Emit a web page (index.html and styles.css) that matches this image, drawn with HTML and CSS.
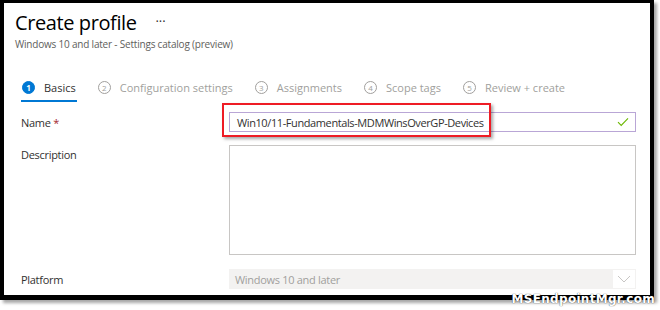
FILE: index.html
```html
<!DOCTYPE html>
<html lang="en">
<head>
<meta charset="utf-8">
<title>Create profile</title>
<link rel="stylesheet" href="styles.css">
</head>
<body>
<div class="frame">
  <header class="head">
    <h1 class="title">Create profile <span class="more">···</span></h1>
    <p class="sub">Windows 10 and later - Settings catalog (preview)</p>
  </header>
  <nav class="steps">
    <div class="step active"><span class="num">1</span><span class="lbl">Basics</span></div>
    <div class="step"><span class="num">2</span><span class="lbl">Configuration settings</span></div>
    <div class="step"><span class="num">3</span><span class="lbl">Assignments</span></div>
    <div class="step"><span class="num">4</span><span class="lbl">Scope tags</span></div>
    <div class="step"><span class="num">5</span><span class="lbl">Review + create</span></div>
  </nav>
  <div class="form">
    <div class="row row-name">
      <label class="label">Name <span class="req">*</span></label>
      <div class="field">
        <div class="input">
          <span class="value">Win10/11-Fundamentals-MDMWinsOverGP-Devices</span>
          <svg class="check" width="12" height="10" viewBox="0 0 12 10"><path d="M1 5.2 L4.2 8.4 L11 1.4" fill="none" stroke="#6bb700" stroke-width="1.1"/></svg>
        </div>
        <div class="highlight"></div>
      </div>
    </div>
    <div class="row row-desc">
      <label class="label">Description</label>
      <div class="field"><div class="textarea"></div></div>
    </div>
    <div class="row row-plat">
      <label class="label">Platform</label>
      <div class="field">
        <div class="select">
          <span class="svalue">Windows 10 and later</span>
          <span class="chev"><svg width="14" height="8" viewBox="0 0 14 8"><path d="M1 1 L7 7 L13 1" fill="none" stroke="#c8c6c4" stroke-width="1"/></svg></span>
        </div>
      </div>
    </div>
  </div>
</div>
<div class="watermark">MSEndpointMgr.com</div>
</body>
</html>
```

FILE: styles.css
```css
* { box-sizing: border-box; }
html, body { margin: 0; padding: 0; background: #fff; }
body {
  width: 660px;
  height: 310px;
  position: relative;
  overflow: hidden;
  font-family: "Open Sans", "Noto Sans", sans-serif;
  color: #323130;
}
.frame {
  width: 654px;
  height: 300px;
  border-style: solid;
  border-color: #000;
  border-width: 3px 4px 5px 4px;
  background: #fff;
  box-shadow: 3px 3px 3px rgba(0,0,0,0.35);
  padding: 5px 0 0 0;
  overflow: hidden;
}
.head { padding-left: 11px; }
.title {
  margin: 0;
  font-size: 20px;
  font-weight: 400;
  line-height: 26px;
  letter-spacing: -0.4px;
  color: #000;
}
.more {
  font-size: 13px;
  margin-left: 14px;
  color: #323130;
  vertical-align: 4px;
  letter-spacing: 0;
}
.sub {
  margin: 1px 0 0 0;
  font-size: 10px;
  line-height: 14px;
  color: #605e5c;
  letter-spacing: -0.2px;
}
.steps {
  display: flex;
  align-items: center;
  gap: 20px;
  margin-top: 24px;
  padding-left: 17px;
  height: 27px;
}
.step {
  display: flex;
  align-items: center;
  gap: 9px;
  height: 27px;
  padding: 0 1px;
  color: #a19f9d;
  font-size: 11px;
  border-bottom: 2px solid transparent;
}
.step.active { color: #323130; border-bottom-color: #0078d4; }
.num {
  width: 13px;
  height: 13px;
  border-radius: 50%;
  border: 1px solid #a19f9d;
  font-size: 8px;
  display: flex;
  align-items: center;
  justify-content: center;
  line-height: 1;
}
.step.active .num { background: #0078d4; border-color: #0078d4; color: #fff; font-weight: 700; }
.form { padding: 10px 14px 0 17px; }
.row { display: flex; }
.label {
  width: 208px;
  flex: none;
  font-size: 11px;
  letter-spacing: -0.3px;
  color: #323130;
}
.req { color: #a4262c; }
.field { flex: 1; position: relative; }
.row-name { align-items: center; }
.input {
  height: 20px;
  border: 1px solid #b9a6d6;
  display: flex;
  align-items: center;
  justify-content: space-between;
  padding: 0 6px 0 7px;
  font-size: 11px;
  letter-spacing: -0.4px;
  color: #323130;
}
.highlight {
  position: absolute;
  left: -7px;
  top: -9px;
  width: 269px;
  height: 34px;
  border: 2px solid #ee1c25;
  box-shadow: 2px 2px 3px rgba(0,0,0,0.35);
}
.row-desc { margin-top: 13px; }
.row-desc .label { padding-top: 2px; }
.textarea { height: 110px; border: 1px solid #c8c6c4; }
.row-plat { margin-top: 14px; align-items: center; }
.select {
  height: 20px;
  background: #f3f2f1;
  display: flex;
  align-items: center;
  justify-content: space-between;
  padding-left: 6px;
  font-size: 11px;
  letter-spacing: -0.3px;
  color: #a19f9d;
}
.chev {
  width: 24px;
  height: 20px;
  display: flex;
  align-items: center;
  justify-content: center;
  background: #fff;
  border: 1px solid #f3f2f1;
}
.watermark {
  position: absolute;
  right: 5px;
  bottom: 5px;
  color: #fff;
  font-family: "DejaVu Sans", sans-serif;
  font-weight: 700;
  font-size: 12px;
  line-height: 12px;
  letter-spacing: 0.3px;
  text-shadow: 0 0 1px #000;
}
```
